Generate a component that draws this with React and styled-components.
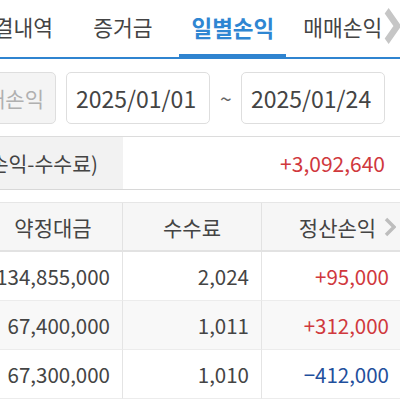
import React from 'react'
import styled, { createGlobalStyle } from 'styled-components'

const GlobalStyle = createGlobalStyle`
  html, body {
    margin: 0;
    padding: 0;
    background: #fff;
  }
  body {
    font-family: 'Noto Sans CJK KR', 'Noto Sans', sans-serif;
    color: #444;
    overflow: hidden;
  }
  #root {
    width: 400px;
    overflow: hidden;
  }
`

const tabs = [
  { label: '체결내역' },
  { label: '증거금' },
  { label: '일별손익', active: true },
  { label: '매매손익' },
]

const rows = [
  { amount: '134,855,000', fee: '2,024', pnl: '+95,000' },
  { amount: '67,400,000', fee: '1,011', pnl: '+312,000' },
  { amount: '67,300,000', fee: '1,010', pnl: '-412,000' },
]

const Chevron = ({ w, h, stroke, width }) => (
  <svg width={w} height={h} viewBox="0 0 12 20" fill="none" preserveAspectRatio="none">
    <path d="M2 2 L10 10 L2 18" stroke={stroke} strokeWidth={width} />
  </svg>
)

const App = () => (
  <Page>
    <GlobalStyle />
    <TabBar>
      <TabStrip>
        {tabs.map(t => (
          <Tab key={t.label} active={t.active}>
            {t.label}
          </Tab>
        ))}
      </TabStrip>
      <TabMore>
        <Chevron w={16} h={38} stroke="#c6c6c6" width={4.2} />
      </TabMore>
    </TabBar>

    <FilterRow>
      <TypeBox>매매손익</TypeBox>
      <DateBox>2025/01/01</DateBox>
      <Tilde>~</Tilde>
      <DateBox>2025/01/24</DateBox>
    </FilterRow>

    <Summary>
      <SummaryLabel>
        <span>합계(정산손익-수수료)</span>
      </SummaryLabel>
      <SummaryValue>+3,092,640</SummaryValue>
    </Summary>

    <Table>
      <HeadCell>약정대금</HeadCell>
      <HeadCell>수수료</HeadCell>
      <HeadCell last>
        정산손익
        <HeadMore>
          <Chevron w={12} h={20} stroke="#bdbdbd" width={3.4} />
        </HeadMore>
      </HeadCell>
      {rows.map((r, i) => (
        <React.Fragment key={i}>
          <Cell shaded={i % 2 === 1}>{r.amount}</Cell>
          <Cell shaded={i % 2 === 1}>{r.fee}</Cell>
          <Cell shaded={i % 2 === 1} last tone={r.pnl[0] === '+' ? 'up' : 'down'}>
            {r.pnl.replace('-', '\u2212')}
          </Cell>
        </React.Fragment>
      ))}
    </Table>
  </Page>
)

const Page = styled.div`
  width: 400px;
  height: 400px;
  overflow: hidden;
  background: #fff;
`

const TabBar = styled.div`
  position: relative;
  height: 57px;
  border-bottom: 2px solid #2f84d0;
  overflow: hidden;
`

const TabStrip = styled.div`
  display: flex;
  height: 100%;
  margin-left: -39px;
  white-space: nowrap;
`

const Tab = styled.div`
  display: flex;
  align-items: center;
  padding: 0 ${p => (p.active ? '12px' : '13px')} 4px;
  margin-right: ${p => (p.active ? '4px' : '14px')};
  font-size: ${p => (p.active ? '22.5px' : '21.5px')};
  font-weight: ${p => (p.active ? 700 : 400)};
  color: ${p => (p.active ? '#2f86d2' : '#444')};
  box-shadow: ${p => (p.active ? 'inset 0 -3px 0 #2f84d0' : 'none')};
`

const TabMore = styled.div`
  position: absolute;
  right: 0;
  top: 4px;
  width: 17px;
  height: 44px;
  display: flex;
  align-items: center;
  justify-content: flex-end;
  background: rgba(255, 255, 255, 0.7);
`

const FilterRow = styled.div`
  display: flex;
  align-items: center;
  height: 78px;
  border-bottom: 1px solid #dcdcdc;
  box-sizing: border-box;
`

const Box = styled.div`
  height: 52px;
  box-sizing: border-box;
  border: 1px solid #dedede;
  border-radius: 5px;
  display: flex;
  align-items: center;
  white-space: nowrap;
`

const TypeBox = styled(Box)`
  flex: none;
  width: 102px;
  margin-left: -46px;
  justify-content: flex-end;
  padding-right: 11px;
  background: #f4f4f4;
  color: #b0b0b0;
  font-size: 21px;
`

const DateBox = styled(Box)`
  flex: none;
  width: 144px;
  margin-left: 10px;
  padding-left: 9px;
  font-size: 23px;
  color: #444;
  background: #fff;
`

const Tilde = styled.div`
  width: 21px;
  margin-left: 10px;
  margin-right: -10px;
  font-size: 21px;
  color: #666;
`

const Summary = styled.div`
  display: flex;
  height: 53px;
  border-bottom: 1px solid #d8d8d8;
  box-sizing: border-box;
  margin-bottom: 12px;
`

const SummaryLabel = styled.div`
  width: 123px;
  flex: none;
  background: #f2f2f2;
  display: flex;
  align-items: center;
  justify-content: flex-end;
  padding-right: 25px;
  box-sizing: border-box;
  overflow: hidden;
  white-space: nowrap;
  font-size: 20.5px;
  color: #444;
`

const SummaryValue = styled.div`
  flex: 1;
  display: flex;
  align-items: center;
  justify-content: flex-end;
  padding-right: 15px;
  font-size: 21px;
  color: #d0383d;
`

const Table = styled.div`
  display: grid;
  grid-template-columns: 139px 139px 139px;
  grid-auto-rows: 49px;
  margin-left: -16px;
  border-top: 1px solid #e6e6e6;
`

const HeadCell = styled.div`
  position: relative;
  display: flex;
  align-items: center;
  justify-content: center;
  background: #f6f6f6;
  border-bottom: 2px solid #e2e2e2;
  border-right: ${p => (p.last ? 'none' : '1px solid #e2e2e2')};
  font-size: 21px;
  color: #444;
  padding-left: ${p => (p.last ? '12px' : '0')};
`

const HeadMore = styled.span`
  position: absolute;
  right: 5px;
  top: 14px;
  display: flex;
`

const Cell = styled.div`
  display: flex;
  align-items: center;
  justify-content: flex-end;
  padding-right: 12px;
  background: ${p => (p.shaded ? '#f8f8f8' : '#fff')};
  border-bottom: 1px solid #ececec;
  border-right: ${p => (p.last ? 'none' : '1px solid #e4e4e4')};
  font-size: 20.5px;
  color: ${p => (p.tone === 'up' ? '#d0383d' : p.tone === 'down' ? '#1f4f9c' : '#444')};
`

export default App
